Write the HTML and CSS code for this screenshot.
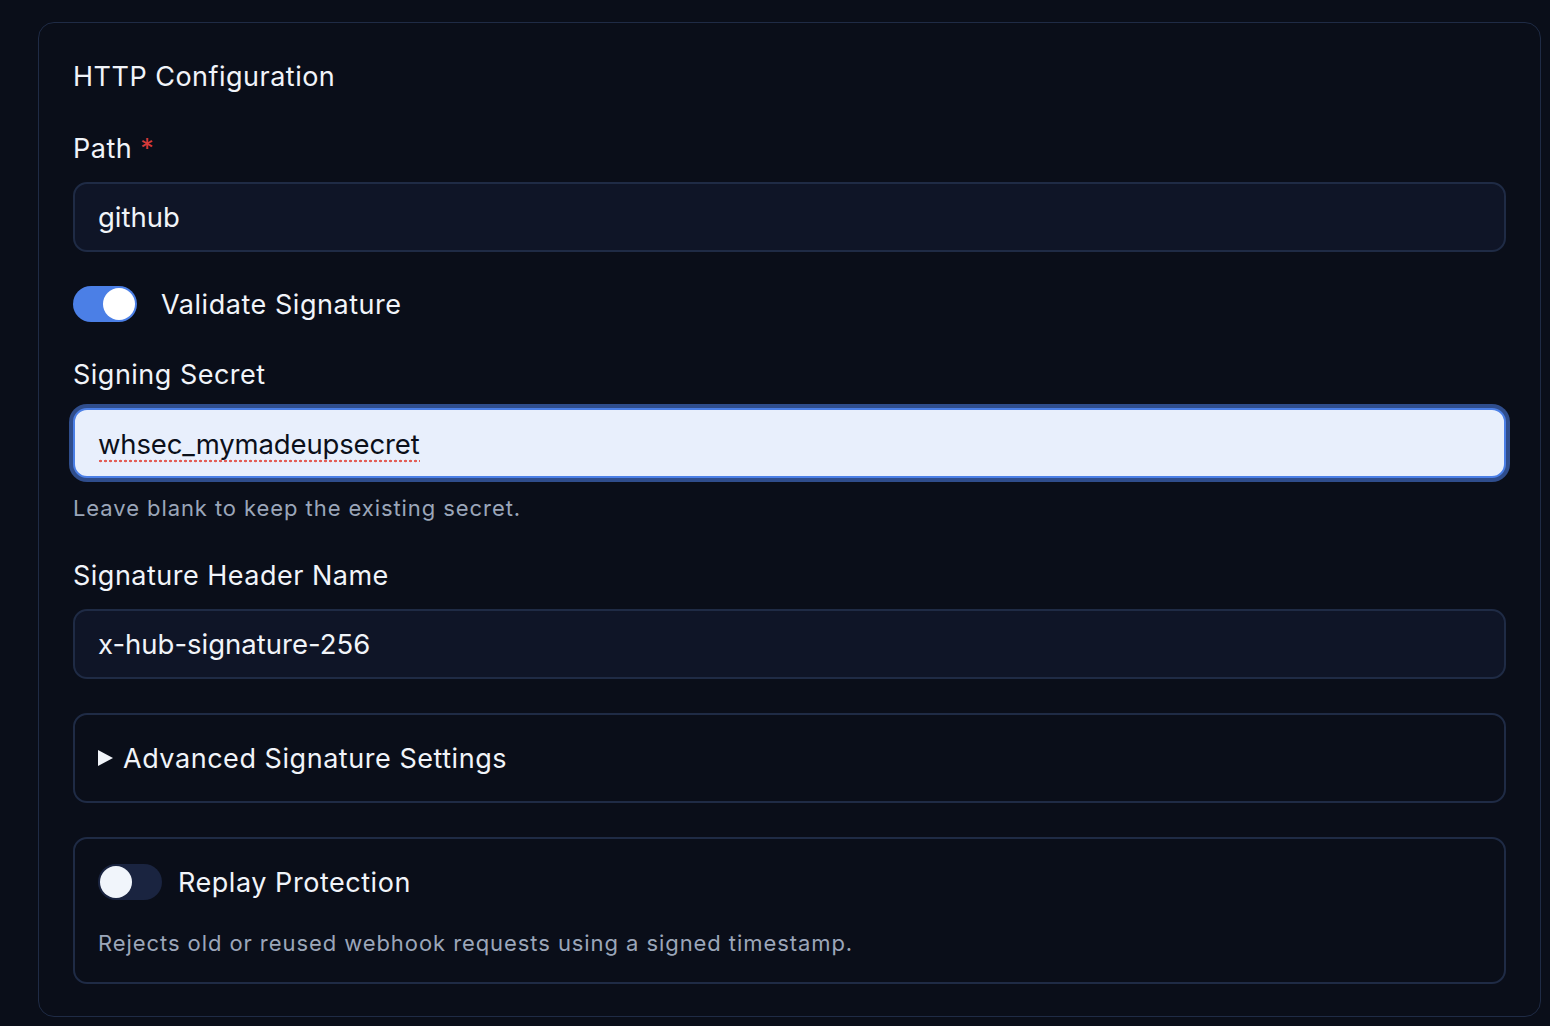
FILE: index.html
```html
<!DOCTYPE html>
<html>
<head>
    <title>HTTP Configuration</title>
    <link rel="stylesheet" href="styles.css">
</head>
<body>
    <div class="panel">
        <h2 class="panel-title">HTTP Configuration</h2>

        <div class="field">
            <label class="field-label" for="path">Path <span class="required">*</span></label>
            <input type="text" id="path" class="text-input" value="github">
        </div>

        <div class="switch-row">
            <span class="switch on"><span class="switch-knob"></span></span>
            <span class="switch-label">Validate Signature</span>
        </div>

        <div class="field">
            <label class="field-label" for="secret">Signing Secret</label>
            <div class="text-input focused"><span class="misspelled">whsec_mymadeupsecret</span></div>
            <p class="hint">Leave blank to keep the existing secret.</p>
        </div>

        <div class="field">
            <label class="field-label" for="header">Signature Header Name</label>
            <input type="text" id="header" class="text-input" value="x-hub-signature-256">
        </div>

        <details class="advanced">
            <summary>Advanced Signature Settings</summary>
        </details>

        <div class="replay-box">
            <div class="switch-row compact">
                <span class="switch"><span class="switch-knob"></span></span>
                <span class="switch-label">Replay Protection</span>
            </div>
            <p class="hint">Rejects old or reused webhook requests using a signed timestamp.</p>
        </div>
    </div>
</body>
</html>
```

FILE: styles.css
```css
:root {
    --bg-color: #0a0e19;
    --input-bg: #0f1527;
    --border-color: #1f2b45;
    --text-color: #f1f4f9;
    --muted-color: #9ba6b9;
    --accent: #4b7fe6;
}

* {
    box-sizing: border-box;
}

body {
    margin: 0;
    padding: 22px 9px 9px 38px;
    background: var(--bg-color);
    color: var(--text-color);
    font-family: Inter, "Noto Sans", sans-serif;
    -webkit-font-smoothing: antialiased;
}

.panel {
    display: flex;
    flex-direction: column;
    gap: 34px;
    padding: 35px 34px 32px;
    border: 1px solid var(--border-color);
    border-radius: 16px;
    background: var(--bg-color);
}

.panel-title {
    margin: 0;
    font-size: 27px;
    font-weight: 400;
    line-height: 38px;
    letter-spacing: 0.018em;
}

.field {
    display: flex;
    flex-direction: column;
    gap: 14px;
}

.field-label {
    font-size: 27px;
    font-weight: 400;
    line-height: 38px;
    letter-spacing: 0.018em;
}

.required {
    color: #d63a3a;
}

.text-input {
    display: block;
    width: 100%;
    height: 70px;
    padding: 0 23px;
    border: 2px solid var(--border-color);
    border-radius: 14px;
    background: var(--input-bg);
    color: var(--text-color);
    font-family: inherit;
    font-size: 27.5px;
    letter-spacing: 0;
    outline: none;
}

.text-input.focused {
    display: flex;
    align-items: center;
    background: #e8effc;
    color: #0b0f1a;
    border-color: var(--accent);
    box-shadow: 0 0 0 4px #2f4d8c;
}

/* red spell-check dots under the secret */
.misspelled {
    margin-top: 8px;
    padding-bottom: 4px;
    line-height: 1;
    letter-spacing: -0.005em;
    background: radial-gradient(circle, #e35d55 1.1px, transparent 1.6px) repeat-x left bottom / 5px 4px;
}

.hint {
    margin: 0;
    color: var(--muted-color);
    font-size: 22px;
    line-height: 30px;
    letter-spacing: 0.042em;
}

.field .hint {
    margin-top: 1px;
}

.switch-row {
    display: flex;
    align-items: center;
    gap: 24px;
}

.switch-row.compact {
    gap: 16px;
}

.switch {
    position: relative;
    width: 64px;
    height: 36px;
    border-radius: 18px;
    background: #1a2440;
}

.switch.on {
    background: var(--accent);
}

.switch-knob {
    position: absolute;
    top: 2px;
    left: 2px;
    width: 32px;
    height: 32px;
    border-radius: 50%;
    background: #f1f5fb;
}

.switch.on .switch-knob {
    left: 30px;
    background: #fff;
}

.switch-label {
    font-size: 27px;
    font-weight: 400;
    letter-spacing: 0.02em;
}

.advanced {
    border: 2px solid var(--border-color);
    border-radius: 14px;
}

.advanced summary {
    display: flex;
    align-items: center;
    height: 86px;
    padding: 0 23px;
    font-size: 27px;
    font-weight: 400;
    letter-spacing: 0.02em;
    list-style: none;
    cursor: pointer;
}

.advanced summary::before {
    content: '';
    width: 0;
    height: 0;
    margin-right: 10px;
    border-top: 8px solid transparent;
    border-bottom: 8px solid transparent;
    border-left: 15px solid var(--text-color);
}

.replay-box {
    display: flex;
    flex-direction: column;
    gap: 28px;
    padding: 25px 23px 24px;
    border: 2px solid var(--border-color);
    border-radius: 14px;
}
```
